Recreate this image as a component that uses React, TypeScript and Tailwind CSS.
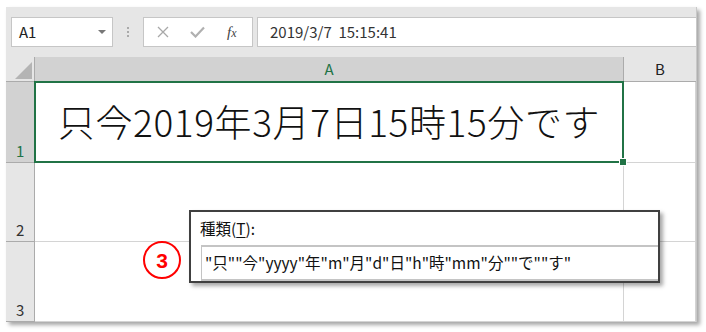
import React from 'react'

const ui = { fontFamily: '"Noto Sans CJK JP", "Noto Sans", sans-serif' }

const RowHead = ({ n, selected }: { n: string; selected?: boolean }) => (
  <div
    className={`${
      selected ? 'bg-[#d2d2d2] text-[#217346]' : 'bg-[#e6e6e6] text-[#333]'
    } border-r border-b border-[#ababab] flex items-end pl-[10px] pb-[1px] text-[15px] leading-[20px]`}
  >
    {n}
  </div>
)

const Cell = ({ children }: { children?: React.ReactNode }) => (
  <div className="bg-white border-r border-b border-[#d4d4d4] relative">{children}</div>
)

export default function App() {
  return (
    <div className="relative w-[706px] h-[332px] bg-white overflow-hidden" style={ui}>
      <div className="ml-[6px] mt-[7px] w-[691px] h-[315px] flex flex-col bg-[#e6e6e6] border-r border-[#c8c8c8] shadow-[3px_3px_4px_rgba(0,0,0,0.35)]">
        {/* formula bar */}
        <div className="h-[50px] flex items-start pt-[10px] pl-[5px] gap-0">
          <div className="w-[102px] h-[30px] bg-white border border-[#c6c6c6] flex items-center justify-between pl-[7px] pr-[6px]">
            <span className="text-[15px] text-[#222]">A1</span>
            <span className="w-0 h-0 border-l-[4px] border-r-[4px] border-t-[4px] border-l-transparent border-r-transparent border-t-[#777]" />
          </div>
          <div className="w-[30px] h-[30px] flex flex-col items-center justify-center gap-[2px]">
            <span className="w-[2px] h-[2px] bg-[#aaa]" />
            <span className="w-[2px] h-[2px] bg-[#aaa]" />
            <span className="w-[2px] h-[2px] bg-[#aaa]" />
          </div>
          <div className="w-[110px] h-[30px] bg-white border border-[#c6c6c6] flex items-center pl-[13px] gap-[21px]">
            <svg width="12" height="12" viewBox="0 0 12 12">
              <path d="M1 1 L11 11 M11 1 L1 11" stroke="#a8a8a8" strokeWidth="1.3" fill="none" />
            </svg>
            <svg width="15" height="12" viewBox="0 0 15 12">
              <path d="M1 6 L5.5 10.5 L14 1.5" stroke="#b0b0b0" strokeWidth="2.2" fill="none" />
            </svg>
            <span className="italic text-[15px] text-[#444] ml-[1px] leading-none" style={{ fontFamily: '"Liberation Serif", serif' }}>
              f<span className="text-[12px]">x</span>
            </span>
          </div>
          <div className="ml-[4px] flex-1 h-[30px] bg-white border border-r-0 border-[#c6c6c6] flex items-center pl-[12px]">
            <span className="text-[15px] text-[#333] whitespace-pre">2019/3/7  15:15:41</span>
          </div>
        </div>

        {/* sheet grid */}
        <div className="flex-1 grid grid-cols-[29px_589px_1fr] grid-rows-[25px_81px_79px_1fr]">
          <div className="bg-[#e6e6e6] border-r border-b border-[#ababab] flex items-end justify-end pr-[2px] pb-[2px]">
            <span className="w-0 h-0 [border-bottom:17px_solid_#b4b4b4] [border-left:17px_solid_transparent]" />
          </div>
          <div className="bg-[#d2d2d2] border-r border-b border-[#ababab] flex items-center justify-center text-[15px] text-[#217346]">
            A
          </div>
          <div className="bg-[#e6e6e6] border-b border-[#ababab] flex items-center justify-center text-[15px] text-[#222]">
            B
          </div>

          <RowHead n="1" selected />
          <Cell>
            <div className="absolute z-10 -left-px -top-px -right-px -bottom-px border-2 border-[#217346] flex items-center justify-center">
              <span className="text-[37px] text-[#111] font-light tracking-[0.6px] whitespace-nowrap">
                只今2019年3月7日15時15分です
              </span>
              <span className="absolute -right-[5px] -bottom-[5px] w-[8px] h-[8px] bg-[#217346] border border-white" />
            </div>
          </Cell>
          <Cell />

          <RowHead n="2" />
          <Cell />
          <Cell />

          <RowHead n="3" />
          <Cell />
          <Cell />
        </div>
      </div>

      {/* callout number */}
      <div className="absolute z-20 left-[143px] top-[241px] w-[38px] h-[38px] rounded-full border-[2.5px] border-[#ff0000] flex items-center justify-center">
        <span className="text-[21px] font-bold text-[#ff0000] leading-none" style={{ fontFamily: '"Liberation Sans", Arial, sans-serif' }}>
          3
        </span>
      </div>

      {/* format dialog excerpt */}
      <div className="absolute z-20 left-[189px] top-[210px] w-[471px] h-[73px] bg-white border-2 border-[#404040] shadow-[3px_3px_4px_rgba(0,0,0,0.35)] flex flex-col">
        <div className="h-[33px] pl-[9px] pt-[6px] text-[15.5px] text-[#111] leading-[20px]">
          種類(<span className="underline underline-offset-2">T</span>):
        </div>
        <div className="ml-[10px] flex-1 border-t-2 border-l border-b-2 border-[#c4c4c4] flex items-center pl-[3px] pb-[1px]">
          <span className="text-[15.5px] text-[#111] whitespace-nowrap">
            "只""今"yyyy"年"m"月"d"日"h"時"mm"分""で""す"
          </span>
        </div>
      </div>
    </div>
  )
}
